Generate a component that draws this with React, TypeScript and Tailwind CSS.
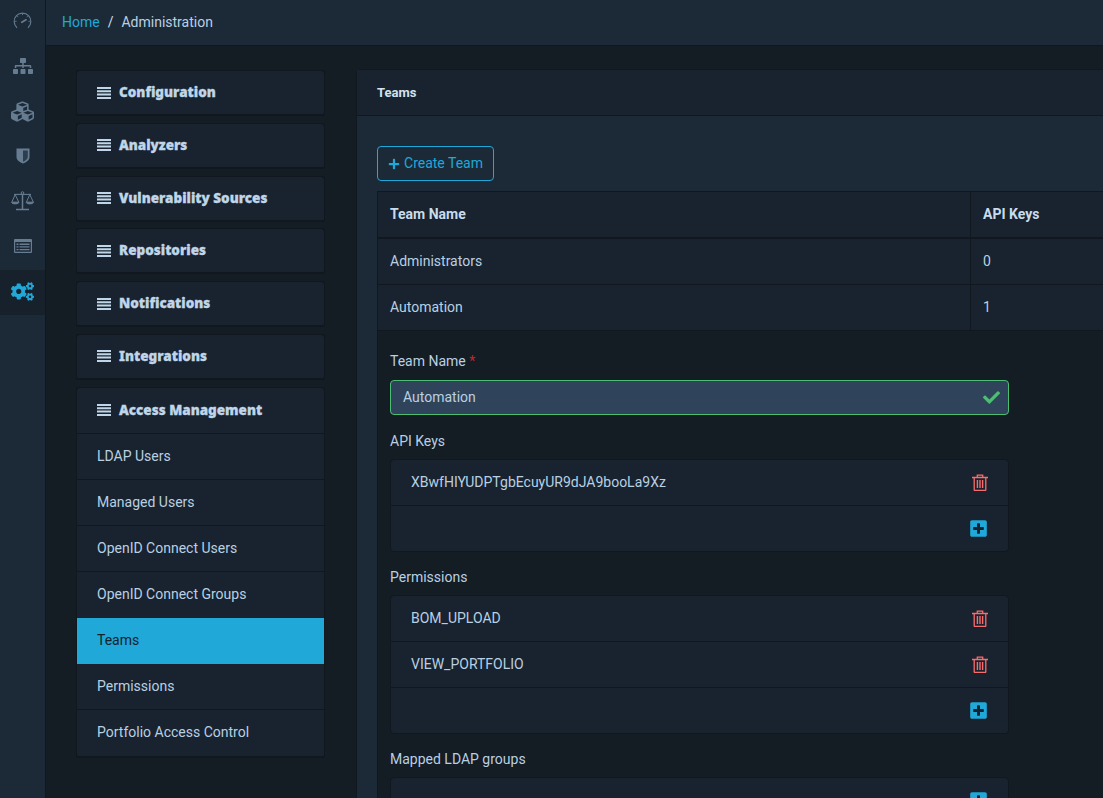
import React from "react";
import { FaSitemap, FaCubes, FaCogs, FaPlusSquare, FaCheck, FaPlus } from "react-icons/fa";

function Gauge() {
  return (
    <svg viewBox="0 0 20 20" className="w-[19px] h-[19px]" fill="none" stroke="currentColor">
      <path d="M4.2 16.6A8.8 8.8 0 1 1 15.8 16.6" strokeWidth="1.2" />
      <path d="M10 1.6v1.6M2.2 9.8h1.5M16.3 9.8h1.5M4.5 4.4l1 1M15.5 4.4l-1 1" strokeWidth="1" />
      <path d="M9.3 10.8l4.4-2.6" strokeWidth="1.8" strokeLinecap="round" />
    </svg>
  );
}

function Shield() {
  return (
    <svg viewBox="0 0 14 16" className="w-[14px] h-[16px]">
      <path d="M0.5 0.5h13v8.5c0 3.2-3.4 5.4-6.5 6.5C3.9 14.4 0.5 12.2 0.5 9z" fill="currentColor" />
      <path d="M7 2.4h4.8V9c0 2.2-2.5 3.8-4.8 4.7z" fill="#1c2a38" opacity="0.75" />
    </svg>
  );
}

function Scale() {
  return (
    <svg viewBox="0 0 23 20" className="w-[23px] h-[20px]" fill="none" stroke="currentColor">
      <circle cx="11.5" cy="2" r="1.3" strokeWidth="1" />
      <path d="M11.5 3.2V18M5 18.4h13" strokeWidth="1.5" />
      <path d="M3 3.4h17" strokeWidth="1.1" />
      <path d="M4.2 3.6L0.8 11.2h7zM18.8 3.6l-3.4 7.6h7z" strokeWidth="1" />
      <path d="M0.6 11.4c.6 2 6.6 2 7.4 0zM15.2 11.4c.6 2 6.6 2 7.4 0z" fill="currentColor" strokeWidth="0.8" />
    </svg>
  );
}

function ListAlt() {
  return (
    <svg viewBox="0 0 18 14" className="w-[18px] h-[14px]">
      <path fillRule="evenodd" fill="currentColor" d="M1 0h16a1 1 0 0 1 1 1v12a1 1 0 0 1-1 1H1a1 1 0 0 1-1-1V1a1 1 0 0 1 1-1zM1.2 3v9.6a.2.2 0 0 0 .2.2h15.2a.2.2 0 0 0 .2-.2V3z" />
      <path fill="currentColor" d="M2.5 4.5h2v1.4h-2zM5.5 4.5h10v1.4h-10zM2.5 7.2h2v1.4h-2zM5.5 7.2h10v1.4h-10zM2.5 9.9h2v1.4h-2zM5.5 9.9h10v1.4h-10z" />
    </svg>
  );
}

function Bars() {
  return (
    <svg viewBox="0 0 14 12" className="w-[14px] h-[12px] shrink-0" fill="currentColor">
      <path d="M0 0h14v2H0zM0 3.3h14v2H0zM0 6.6h14v2H0zM0 9.9h14V12H0z" />
    </svg>
  );
}

function Trash() {
  return (
    <svg viewBox="0 0 16 17" className="w-[16px] h-[17px]" fill="none" stroke="#f86c6b">
      <path d="M0 3.5h16M5.3 3.2V1.2h5.4v2" strokeWidth="1.3" />
      <path d="M2.2 3.5v12.3a.7.7 0 0 0 .7.7h10.2a.7.7 0 0 0 .7-.7V3.5" strokeWidth="1.3" />
      <path d="M5.4 6v8M8 6v8M10.6 6v8" strokeWidth="1.4" />
    </svg>
  );
}

const navIcons = [
  <Gauge />,
  <FaSitemap className="text-[20px]" />,
  <FaCubes className="text-[23px]" />,
  <Shield />,
  <Scale />,
  <ListAlt />,
];

const sections = ["Configuration", "Analyzers", "Vulnerability Sources", "Repositories", "Notifications", "Integrations"];
const items = ["LDAP Users", "Managed Users", "OpenID Connect Users", "OpenID Connect Groups", "Teams", "Permissions", "Portfolio Access Control"];

function SectionHead({ label, tall }: { label: string; tall?: boolean }) {
  return (
    <div className={"px-5 flex items-center gap-[8px] bg-[#18232f] rounded-t-[3px] font-black text-[#c0d6e8] " + (tall ? "h-[46px] border-b border-[#10171e]" : "h-[43px]")}>
      <Bars />
      <span className="font-['Noto_Sans',sans-serif] text-[13.5px] leading-[21px] [-webkit-text-stroke:0.3px_currentColor]">{label}</span>
    </div>
  );
}

function ListBox({ rows, className }: { rows: string[]; className?: string }) {
  return (
    <div className={"w-[619px] border border-[#10171e] rounded-[4px] bg-[#18232f] " + (className ?? "")}>
      {rows.map((r) => (
        <div key={r} className="h-[46px] border-b border-[#10171e] pl-[20px] pr-[20px] flex items-center justify-between">
          <span>{r}</span>
          <Trash />
        </div>
      ))}
      <div className="h-[45px] pr-[20px] flex items-center justify-end">
        <FaPlusSquare className="text-[19px] text-[#20a8d8]" />
      </div>
    </div>
  );
}

export default function App() {
  return (
    <div className="w-[1103px] h-[798px] overflow-hidden flex bg-[#141c24] text-[14px] leading-[21px] text-[#b9d0e3] font-['Roboto',sans-serif]">
      <aside className="w-[46px] shrink-0 bg-[#1c2a38] border-r border-[#10171e] text-[#667c91] flex flex-col">
        {navIcons.map((n, i) => (
          <div key={i} className="h-[45px] pb-[3px] flex items-center justify-center">{n}</div>
        ))}
        <div className="h-[45px] pb-[2px] bg-[#17212c] flex items-center justify-center text-[#20a8d8]">
          <FaCogs className="text-[23px]" />
        </div>
      </aside>
      <div className="flex-1 min-w-0 flex flex-col">
        <header className="h-[46px] shrink-0 bg-[#1c2a38] border-b border-[#10171e] flex items-center pl-4 gap-2">
          <span className="text-[#20a8d8]">Home</span>
          <span className="text-[#c9dcec]">/</span>
          <span className="text-[#b9d0e3]">Administration</span>
        </header>
        <main className="flex gap-[31px] pl-[30px] pt-[23px] min-w-0">
          <nav className="w-[249px] shrink-0 pt-[1px]">
            {sections.map((s) => (
              <div key={s} className="mb-[6.8px] border border-[#10171e] border-b-2 rounded-[3px] overflow-hidden">
                <SectionHead label={s} />
              </div>
            ))}
            <div className="border border-[#10171e] border-b-2 rounded-[3px] overflow-hidden">
              <SectionHead label="Access Management" tall />
              {items.map((it, i) => (
                <div
                  key={it}
                  className={
                    "h-[46px] px-5 flex items-center " +
                    (it === "Teams"
                      ? "bg-[#20a8d8] text-[#14232d]"
                      : "bg-[#18232f] " + (i < items.length - 1 && items[i + 1] !== "Teams" ? "border-b border-[#10171e]" : ""))
                  }
                >
                  {it}
                </div>
              ))}
            </div>
          </nav>
          <section className="w-[800px] shrink-0 border border-[#10171e] rounded-t-[4px] bg-[#1c2a38] flex flex-col">
            <div className="h-[46px] bg-[#18232f] border-b border-[#10171e] px-5 flex items-center font-bold text-[13px] text-[#d3e2ef]">Teams</div>
            <div className="pl-5 pt-[30px]">
              <button className="h-[35px] w-[117px] border border-[#20a8d8] rounded-[4px] text-[#20a8d8] flex items-center justify-center gap-[4px]">
                <FaPlus className="text-[12px]" />
                <span>Create Team</span>
              </button>
              <div className="mt-[10px] border border-[#10171e] border-b-0 border-r-0">
                <div className="h-[47px] bg-[#18232f] border-b-2 border-[#10171e] flex items-center font-bold">
                  <div className="w-[592px] pl-3 text-[#c9dcec] text-[14px]">Team Name</div>
                  <div className="flex-1 h-full flex items-center pl-3 border-l border-[#10171e] text-[#c9dcec] text-[14px]">API Keys</div>
                </div>
                {[["Administrators", "0"], ["Automation", "1"]].map(([a, b]) => (
                  <div key={a} className="h-[46px] bg-[#18232f] border-b border-[#10171e] flex items-center">
                    <div className="w-[592px] pl-3">{a}</div>
                    <div className="flex-1 h-full flex items-center pl-3 border-l border-[#10171e]">{b}</div>
                  </div>
                ))}
                <div className="bg-[#141c24] px-3 pt-[20px] pb-10">
                  <div>Team Name <span className="text-[#c8242b]">*</span></div>
                  <div className="mt-[8px] w-[619px] h-[35px] rounded-[4px] border border-[#4dbd74] bg-[#2f445a] pl-3 pr-[8px] flex items-center justify-between">
                    <span>Automation</span>
                    <FaCheck className="text-[17px] text-[#4dbd74]" />
                  </div>
                  <div className="mt-[16px]">API Keys</div>
                  <ListBox className="mt-[7px]" rows={["XBwfHIYUDPTgbEcuyUR9dJA9booLa9Xz"]} />
                  <div className="mt-[15px]">Permissions</div>
                  <ListBox className="mt-[7px]" rows={["BOM_UPLOAD", "VIEW_PORTFOLIO"]} />
                  <div className="mt-[15px]">Mapped LDAP groups</div>
                  <ListBox className="mt-[7px]" rows={[]} />
                </div>
              </div>
            </div>
          </section>
        </main>
      </div>
    </div>
  );
}
